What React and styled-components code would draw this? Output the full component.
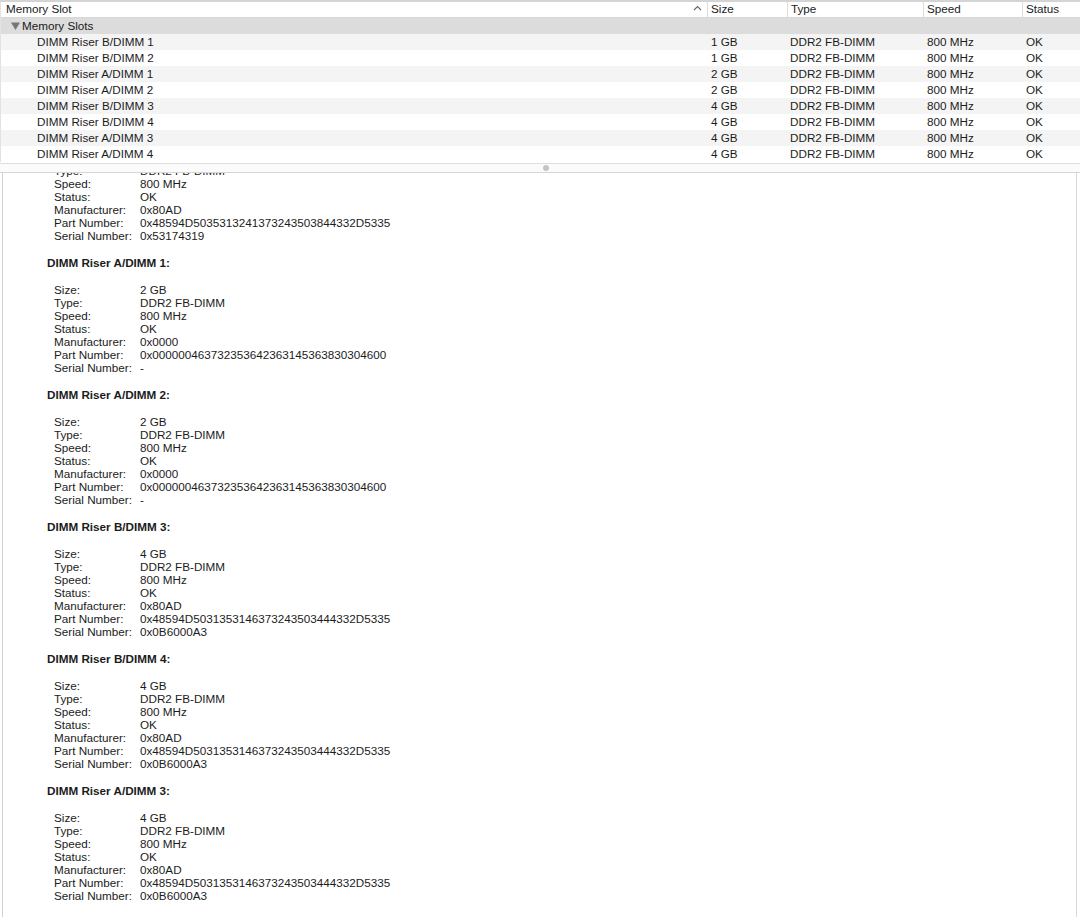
import React from "react";
import styled, { createGlobalStyle } from "styled-components";

const Global = createGlobalStyle`
  html, body { margin: 0; padding: 0; background: #fff; }
  body {
    width: 1080px; height: 917px; overflow: hidden;
    font-family: "Liberation Sans", Arial, Helvetica, sans-serif;
    font-size: 11.7px; color: #1c1c1c;
    -webkit-font-smoothing: antialiased;
  }
`;

const COLS = "706px 80px 136px 99px 1fr";

const Window = styled.div`
  display: flex;
  flex-direction: column;
  height: 917px;
  border-top: 2px solid #d4d4d4;
  box-sizing: border-box;
`;

const TablePane = styled.div`
  display: flex;
  flex-direction: column;
  border-left: 1px solid #e2e2e2;
`;

const HeaderRow = styled.div`
  display: grid;
  grid-template-columns: ${COLS};
  height: 15px;
  border-bottom: 1px solid #d8d8d8;
  background: #fff;
`;

const HeaderCell = styled.div`
  position: relative;
  padding-left: ${(p) => p.$pad || 3}px;
  line-height: 13px;
  white-space: nowrap;
  border-left: ${(p) => (p.$first ? "none" : "1px solid #dcdcdc")};
`;

const SortArrow = styled.svg`
  position: absolute;
  right: 5px;
  top: 3px;
`;

const GroupRow = styled.div`
  display: flex;
  align-items: center;
  height: 16px;
  line-height: 14px;
  padding-bottom: 1px;
  box-sizing: border-box;
  background: #dcdcdc;
  padding-left: 10px;
  gap: 2px;
  color: #202020;
`;

const Row = styled.div`
  display: grid;
  grid-template-columns: ${COLS};
  height: 16px;
  line-height: 16px;
  background: ${(p) => (p.$alt ? "#f4f4f4" : "#fff")};
`;

const Cell = styled.div`
  padding-left: ${(p) => p.$pad || 3}px;
  white-space: nowrap;
`;

const Splitter = styled.div`
  display: flex;
  align-items: center;
  justify-content: center;
  height: 8px;
  margin-top: 1px;
  border-top: 1px solid #dedede;
  border-bottom: 1px solid #d6d6d6;
  background: #fbfbfb;
`;

const Dot = styled.div`
  width: 6px;
  height: 6px;
  border-radius: 50%;
  background: #c4c4c4;
  margin-left: 12px;
`;

const DetailPane = styled.div`
  flex: 1;
  overflow: hidden;
  margin-left: 2px;
  margin-right: 3px;
  border-left: 1px solid #d2d2d2;
  border-right: 1px solid #d8d8d8;
  background: #fff;
`;

const DetailInner = styled.div`
  margin-top: ${(p) => p.$offset}px;
  padding-left: 44px;
`;

const Section = styled.div`
  margin-bottom: 14px;
`;

const Heading = styled.div`
  font-weight: bold;
  line-height: 13px;
  margin-bottom: 14px;
`;

const Props = styled.div`
  display: grid;
  grid-template-columns: 86px 1fr;
  padding-left: 7px;
  line-height: 13px;
`;

const Label = styled.div`
  white-space: nowrap;
`;

const Value = styled.div`
  white-space: nowrap;
`;

const slots = [
  { name: "DIMM Riser B/DIMM 1", size: "1 GB" },
  { name: "DIMM Riser B/DIMM 2", size: "1 GB" },
  { name: "DIMM Riser A/DIMM 1", size: "2 GB" },
  { name: "DIMM Riser A/DIMM 2", size: "2 GB" },
  { name: "DIMM Riser B/DIMM 3", size: "4 GB" },
  { name: "DIMM Riser B/DIMM 4", size: "4 GB" },
  { name: "DIMM Riser A/DIMM 3", size: "4 GB" },
  { name: "DIMM Riser A/DIMM 4", size: "4 GB" },
];

const details = [
  { name: "DIMM Riser B/DIMM 2", size: "1 GB", mfr: "0x80AD", part: "0x48594D5035313241373243503844332D5335", serial: "0x53174319" },
  { name: "DIMM Riser A/DIMM 1", size: "2 GB", mfr: "0x0000", part: "0x000000463732353642363145363830304600", serial: "-" },
  { name: "DIMM Riser A/DIMM 2", size: "2 GB", mfr: "0x0000", part: "0x000000463732353642363145363830304600", serial: "-" },
  { name: "DIMM Riser B/DIMM 3", size: "4 GB", mfr: "0x80AD", part: "0x48594D5031353146373243503444332D5335", serial: "0x0B6000A3" },
  { name: "DIMM Riser B/DIMM 4", size: "4 GB", mfr: "0x80AD", part: "0x48594D5031353146373243503444332D5335", serial: "0x0B6000A3" },
  { name: "DIMM Riser A/DIMM 3", size: "4 GB", mfr: "0x80AD", part: "0x48594D5031353146373243503444332D5335", serial: "0x0B6000A3" },
  { name: "DIMM Riser A/DIMM 4", size: "4 GB", mfr: "0x80AD", part: "0x48594D5031353146373243503444332D5335", serial: "0x0B6000A3" },
];

export default function App() {
  return (
    <>
      <Global />
      <Window>
        <TablePane>
          <HeaderRow>
            <HeaderCell $first $pad={5}>
              Memory Slot
              <SortArrow width="9" height="6" viewBox="0 0 9 6">
                <polyline points="1,5 4.5,1.5 8,5" fill="none" stroke="#666" strokeWidth="1.1" />
              </SortArrow>
            </HeaderCell>
            <HeaderCell>Size</HeaderCell>
            <HeaderCell>Type</HeaderCell>
            <HeaderCell>Speed</HeaderCell>
            <HeaderCell>Status</HeaderCell>
          </HeaderRow>
          <GroupRow>
            <svg width="9" height="8" viewBox="0 0 9 8">
              <polygon points="0,0.5 9,0.5 4.5,8" fill="#777" />
            </svg>
            <span>Memory Slots</span>
          </GroupRow>
          {slots.map((s, i) => (
            <Row key={s.name} $alt={i % 2 === 0}>
              <Cell $pad={36}>{s.name}</Cell>
              <Cell $pad={4}>{s.size}</Cell>
              <Cell $pad={3}>DDR2 FB-DIMM</Cell>
              <Cell $pad={4}>800 MHz</Cell>
              <Cell $pad={4}>OK</Cell>
            </Row>
          ))}
        </TablePane>
        <Splitter>
          <Dot />
        </Splitter>
        <DetailPane>
          <DetailInner $offset={-49}>
            {details.map((d) => (
              <Section key={d.name}>
                <Heading>{d.name}:</Heading>
                <Props>
                  <Label>Size:</Label><Value>{d.size}</Value>
                  <Label>Type:</Label><Value>DDR2 FB-DIMM</Value>
                  <Label>Speed:</Label><Value>800 MHz</Value>
                  <Label>Status:</Label><Value>OK</Value>
                  <Label>Manufacturer:</Label><Value>{d.mfr}</Value>
                  <Label>Part Number:</Label><Value>{d.part}</Value>
                  <Label>Serial Number:</Label><Value>{d.serial}</Value>
                </Props>
              </Section>
            ))}
          </DetailInner>
        </DetailPane>
      </Window>
    </>
  );
}
